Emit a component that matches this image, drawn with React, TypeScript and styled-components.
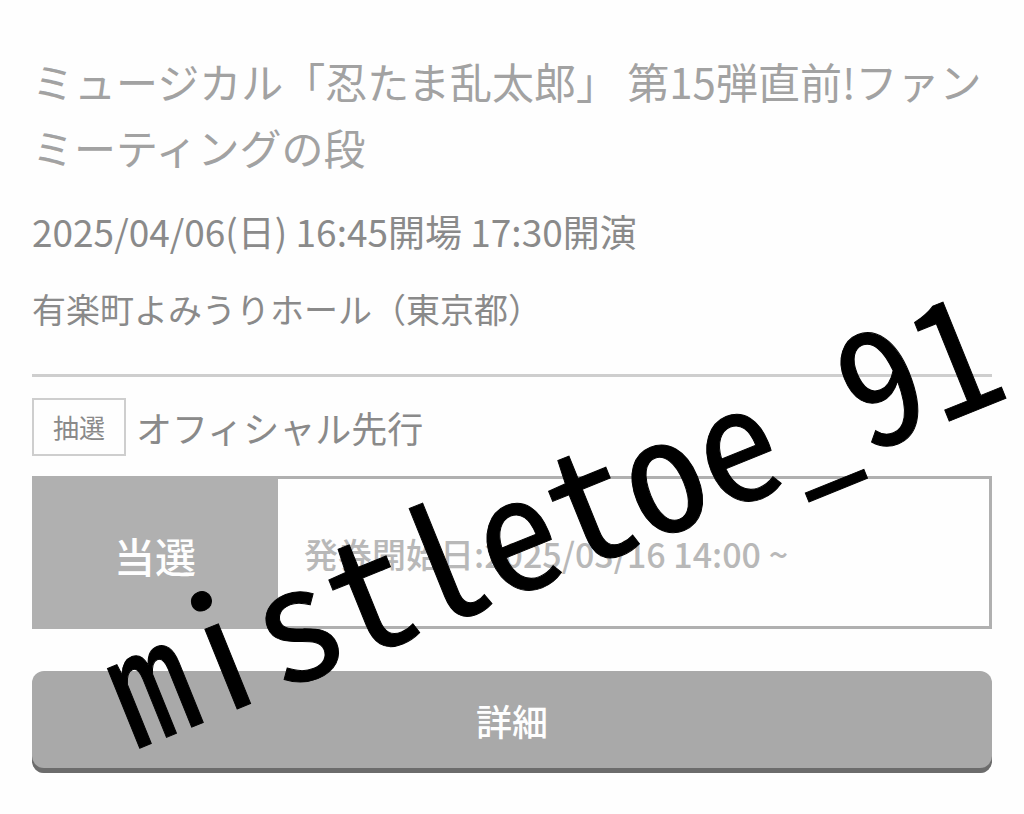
import React from "react";
import styled, { createGlobalStyle } from "styled-components";

const GlobalStyle = createGlobalStyle`
  * { box-sizing: border-box; }
  body {
    margin: 0;
    background: #fefefe;
    color: #8a8a8a;
    font-family: "Noto Sans CJK JP", sans-serif;
  }
`;

const Page = styled.main`
  position: relative;
  overflow: hidden;
  padding: 48px 32px 40px;
`;

const Title = styled.h1`
  margin: 0;
  font-size: 42px;
  line-height: 66px;
  font-weight: 400;
  color: #a2a2a2;
`;

const Schedule = styled.p`
  margin: 22px 0 0;
  font-size: 37px;
  line-height: 58px;
`;

const Venue = styled.p`
  margin: 22px 0 0;
  font-size: 34px;
  line-height: 54px;
`;

const Divider = styled.hr`
  height: 3px;
  margin: 38px 0 21px;
  border: 0;
  background: #cecece;
`;

const EntryHeading = styled.div`
  display: flex;
  align-items: center;
  gap: 10px;
`;

const Tag = styled.span`
  padding: 0 19px;
  border: 2px solid #cecece;
  font-size: 26px;
  line-height: 54px;
`;

const EntryName = styled.h2`
  margin: 0;
  font-size: 36px;
  line-height: 58px;
  font-weight: 400;
`;

const Result = styled.section`
  display: flex;
  min-height: 153px;
  margin-top: 20px;
  border: 3px solid #b0b0b0;
`;

const ResultStatus = styled.strong`
  display: flex;
  flex: 0 0 243px;
  align-items: center;
  justify-content: center;
  padding: 4px 3px 0 0;
  background: #b0b0b0;
  color: #fefefe;
  font-size: 41px;
  font-weight: 500;
`;

const IssueDate = styled.p`
  display: flex;
  align-items: center;
  margin: 0;
  padding: 2px 26px 0;
  color: #b8b8b8;
  font-size: 34px;
  font-weight: 500;
`;

const DetailButton = styled.button`
  display: block;
  width: 100%;
  margin-top: 42px;
  padding: 18px 0 21px;
  border: 0;
  border-radius: 12px;
  background: #a9a9a9;
  box-shadow: inset 0 -5px 0 #6c6c6c;
  color: #fefefe;
  font-family: inherit;
  font-size: 36px;
  line-height: 63px;
  font-weight: 500;
`;

const Watermark = styled.div`
  position: absolute;
  left: 50%;
  top: 510px;
  transform: translate(-50%, -50%) translateX(36px) rotate(-22deg);
  pointer-events: none;
  color: #000;
  font-family: "Noto Sans Mono CJK JP", "DejaVu Sans Mono", monospace;
  font-size: 158px;
  line-height: 1;
  white-space: nowrap;
  -webkit-text-stroke: 1px #000;
`;

export default function App() {
  return (
    <>
      <GlobalStyle />
      <Page>
        <Title>ミュージカル「忍たま乱太郎」 第15弾直前!ファンミーティングの段</Title>
        <Schedule>2025/04/06(日) 16:45開場 17:30開演</Schedule>
        <Venue>有楽町よみうりホール（東京都）</Venue>
        <Divider />
        <EntryHeading>
          <Tag>抽選</Tag>
          <EntryName>オフィシャル先行</EntryName>
        </EntryHeading>
        <Result>
          <ResultStatus>当選</ResultStatus>
          <IssueDate>発券開始日:2025/03/16 14:00 ~</IssueDate>
        </Result>
        <DetailButton type="button">詳細</DetailButton>
        <Watermark>mistletoe_91</Watermark>
      </Page>
    </>
  );
}
